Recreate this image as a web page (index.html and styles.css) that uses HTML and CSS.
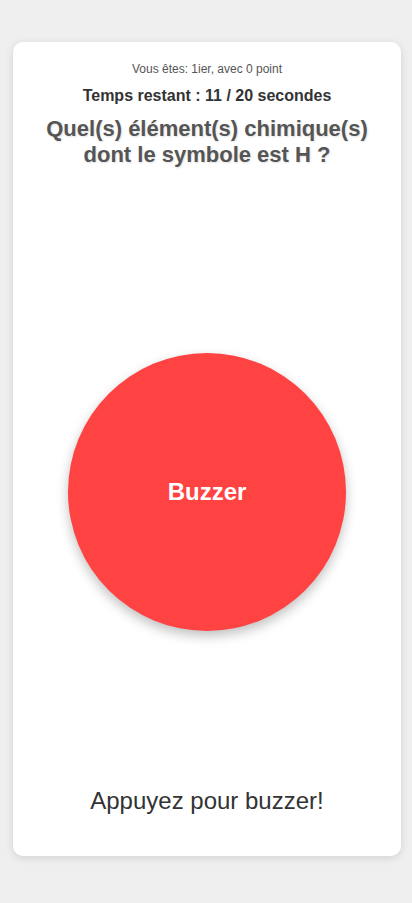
FILE: index.html
```html
<!DOCTYPE html>
<html lang="fr">
<head>
<meta charset="utf-8">
<title>Buzzer</title>
<link rel="stylesheet" href="styles.css">
</head>
<body>
<main class="card">
  <p class="rank">Vous êtes: 1ier, avec 0 point</p>
  <p class="timer">Temps restant : 11 / 20 secondes</p>
  <h1 class="question">Quel(s) élément(s) chimique(s) dont le symbole est H ?</h1>
  <div class="stage">
    <button class="buzzer">Buzzer</button>
  </div>
  <p class="hint">Appuyez pour buzzer!</p>
</main>
</body>
</html>
```
FILE: styles.css
```css
html, body {
  margin: 0;
  padding: 0;
}
body {
  background: #efefef;
  font-family: "Liberation Sans", Arial, sans-serif;
  padding: 42px 11px 0 13px;
  height: 903px;
  box-sizing: border-box;
}
.card {
  background: #fff;
  border-radius: 10px;
  box-shadow: 0 2px 8px rgba(0,0,0,0.12);
  height: 814px;
  box-sizing: border-box;
  padding: 20px 20px 41px;
  display: flex;
  flex-direction: column;
  align-items: center;
  text-align: center;
}
.rank {
  margin: 0;
  font-size: 12px;
  line-height: 14px;
  color: #555;
}
.timer {
  margin: 11px 0 0;
  font-size: 16px;
  line-height: 18px;
  font-weight: bold;
  color: #333;
}
.question {
  margin: 11px 0 0;
  font-size: 22px;
  line-height: 26px;
  font-weight: bold;
  color: #555;
  text-shadow: 1px 1px 2px rgba(0,0,0,0.12);
}
.stage {
  flex: 1;
  display: flex;
  justify-content: center;
  align-items: flex-start;
  padding-top: 185px;
}
.buzzer {
  width: 278px;
  height: 278px;
  border-radius: 50%;
  border: none;
  background: #ff4242;
  color: #fff;
  font-family: "Liberation Sans", Arial, sans-serif;
  font-size: 24px;
  font-weight: bold;
  box-shadow: 0 5px 12px rgba(0,0,0,0.25);
  padding: 0;
}
.hint {
  margin: 0;
  font-size: 24px;
  line-height: 28px;
  color: #333;
}
```
